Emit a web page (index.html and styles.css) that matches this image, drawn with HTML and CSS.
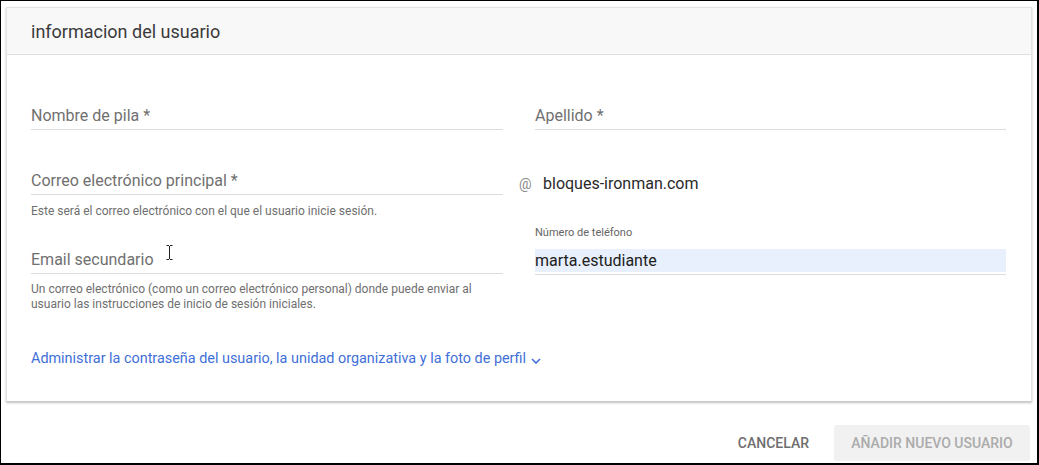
FILE: index.html
```html
<!DOCTYPE html>
<html lang="es">
<head>
<meta charset="utf-8">
<title>informacion del usuario</title>
<link rel="stylesheet" href="styles.css">
</head>
<body>
<div class="frame">
  <div class="card">
    <div class="card-header">informacion del usuario</div>
    <div class="card-body">
      <div class="grid">
        <div class="cell row1">
          <div class="field"><span class="placeholder">Nombre de pila *</span></div>
        </div>
        <div class="cell row1">
          <div class="field"><span class="placeholder">Apellido *</span></div>
        </div>

        <div class="cell row2">
          <div class="field"><span class="placeholder">Correo electrónico principal *</span></div>
          <div class="helper">Este será el correo electrónico con el que el usuario inicie sesión.</div>
        </div>
        <div class="cell row2 domain-cell">
          <div class="domain"><span class="at">@</span><span class="domain-name">bloques-ironman.com</span></div>
        </div>

        <div class="cell row3">
          <div class="field cursor-host"><span class="placeholder">Email secundario</span>
            <svg class="ibeam" width="7" height="15" viewBox="0 0 7 15"><path d="M0.5 0.5h2.5M4 0.5h2.5M3.5 1v13M0.5 14.5h2.5M4 14.5h2.5" stroke="#222" stroke-width="1" fill="none"/></svg>
          </div>
          <div class="helper">Un correo electrónico (como un correo electrónico personal) donde puede enviar al usuario las instrucciones de inicio de sesión iniciales.</div>
        </div>
        <div class="cell row3">
          <div class="small-label">Número de teléfono</div>
          <div class="field filled"><span class="value">marta.estudiante</span></div>
        </div>
      </div>

      <a class="more-link" href="#">Administrar la contraseña del usuario, la unidad organizativa y la foto de perfil<svg class="chev" width="10" height="6" viewBox="0 0 10 6"><path d="M1 1l4 4 4-4" stroke="#3f6fd8" stroke-width="1.6" fill="none"/></svg></a>
    </div>
  </div>
  <div class="actions">
    <button class="btn btn-flat">CANCELAR</button>
    <button class="btn btn-disabled">AÑADIR NUEVO USUARIO</button>
  </div>
</div>
</body>
</html>
```

FILE: styles.css
```css
html, body {
  margin: 0;
  padding: 0;
  background: #fff;
}
body {
  font-family: Roboto, "Liberation Sans", Arial, sans-serif;
  color: #212121;
}
.frame {
  width: 1039px;
  height: 465px;
  box-sizing: border-box;
  border-style: solid;
  border-color: #000;
  border-width: 1px 2px 2px 1px;
  padding: 6px 5px 0 5px;
  background: #fff;
}
.card {
  height: 395px;
  box-sizing: border-box;
  border: 1px solid #e3e3e3;
  border-bottom-color: #c8c8c8;
  box-shadow: 0 1px 2px rgba(0, 0, 0, 0.25);
  background: #fff;
  display: flex;
  flex-direction: column;
}
.card-header {
  height: 47px;
  box-sizing: border-box;
  background: #f8f8f8;
  border-bottom: 1px solid #e0e0e0;
  padding-left: 24px;
  font-size: 18px;
  line-height: 47px;
  color: #3a3a3a;
}
.card-body {
  padding: 46px 25px 0 24px;
}
.grid {
  display: grid;
  grid-template-columns: 472px 471px;
  column-gap: 32px;
}
.cell {
  display: flex;
  flex-direction: column;
}
.row1 { height: 65px; }
.row2 { height: 79px; }
.row3 { height: 74px; }
.field {
  height: 29px;
  box-sizing: border-box;
  border-bottom: 1px solid #dcdcdc;
  display: flex;
  align-items: flex-end;
  padding-bottom: 4px;
  position: relative;
}
.placeholder {
  font-size: 16px;
  line-height: 18px;
  color: #707070;
}
.helper {
  font-size: 12px;
  line-height: 15px;
  color: #6f6f6f;
  margin-top: 8px;
}
.row2 .helper {
  margin-top: 9px;
}
.domain {
  height: 29px;
  display: flex;
  align-items: flex-end;
  padding-bottom: 2px;
  box-sizing: border-box;
  margin-left: -16px;
}
.at {
  font-size: 14px;
  color: #8a8a8a;
  line-height: 18px;
  width: 24px;
}
.domain-name {
  font-size: 16px;
  line-height: 18px;
  color: #2a2a2a;
}
.small-label {
  font-size: 11px;
  line-height: 14px;
  color: #666;
  margin-top: -19px;
  height: 15px;
}
.field.filled {
  margin-top: 8px;
  height: 26px;
  align-items: center;
  padding: 0;
  background: linear-gradient(#e8f0fe, #e8f0fe) top / 100% 23px no-repeat;
}
.value {
  font-size: 16px;
  line-height: 23px;
  color: #202020;
  align-self: flex-start;
}
.ibeam {
  position: absolute;
  left: 135px;
  top: 0px;
}
.more-link {
  display: inline-flex;
  align-items: center;
  margin-top: 31px;
  font-size: 14.4px;
  line-height: 18px;
  color: #3f6fd8;
  text-decoration: none;
}
.chev {
  margin-left: 5px;
  margin-top: 3px;
}
.actions {
  display: flex;
  justify-content: flex-end;
  align-items: center;
  gap: 4px;
  margin-top: 23px;
  padding-right: 2px;
}
.btn {
  font-family: Roboto, "Liberation Sans", Arial, sans-serif;
  font-size: 14px;
  font-weight: 500;
  border: none;
  height: 36px;
  padding: 0 16px;
  border-radius: 2px;
}
.btn-flat {
  background: transparent;
  color: #6e6e6e;
  padding: 0 21px 0 24px;
}
.btn-disabled {
  background: #f1f1f1;
  color: #ababab;
  width: 196px;
}
```
